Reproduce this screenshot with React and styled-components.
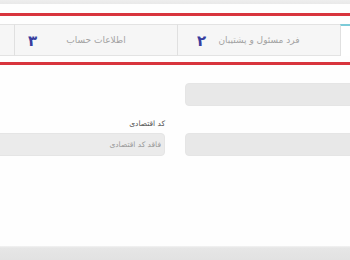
import styled, { createGlobalStyle } from "styled-components";

const GlobalStyle = createGlobalStyle`
  html, body {
    margin: 0;
    padding: 0;
    background: #e9e9e9;
    font-family: "DejaVu Sans", "Noto Sans", sans-serif;
    overflow: hidden;
  }
  * { box-sizing: border-box; }
`;

const Page = styled.div`
  width: 350px;
  height: 260px;
  overflow: hidden;
  padding-top: 4px;
  background: linear-gradient(#eeeeee 0, #e9e9e9 4px, #e9e9e9 246px, #f3f3f3 246px, #e6e6e6 248px, #e2e2e2 260px);
`;

const Card = styled.div`
  direction: rtl;
  background: #fefefe;
  height: 242px;
  padding-top: 9px;
  overflow: hidden;
`;

const Steps = styled.div`
  border-top: 3px solid #d8343d;
  border-bottom: 3px solid #d8343d;
  padding: 8px 0 6px;
`;

const TabRow = styled.div`
  display: flex;
  margin-right: -153px;
  width: 700px;
`;

const Tab = styled.div`
  flex: 0 0 163px;
  height: 32px;
  display: grid;
  grid-template-columns: 1fr auto 1fr;
  align-items: center;
  direction: ltr;
  background: ${({ $active }) => ($active ? "#ffffff" : "#f6f6f6")};
  border-top: ${({ $active }) => ($active ? "2px solid #7ccbd8" : "1px solid #e3e3e3")};
  border-bottom: ${({ $active }) => ($active ? "none" : "1px solid #e3e3e3")};
  border-left: 1px solid #e0e0e0;
`;

const Num = styled.span`
  justify-self: start;
  padding-left: ${({ $pad }) => $pad}px;
  color: #383e9f;
  font-size: 15px;
  font-weight: bold;
  line-height: 1;
  margin-top: 3px;
`;

const TabLabel = styled.span`
  direction: rtl;
  color: #a3a3a3;
  font-size: 9px;
  white-space: nowrap;
`;

const Form = styled.div`
  display: grid;
  grid-template-columns: 200px 200px;
  column-gap: 20px;
  margin-right: -35px;
  width: 420px;
  padding-top: 18px;
`;

const Field = styled.div`
  display: flex;
  flex-direction: column;
  min-height: 23px;
  margin-bottom: ${({ $mb }) => $mb || 0}px;
`;

const Label = styled.label`
  color: #555;
  font-size: 7.5px;
  height: 14px;
  line-height: 10px;
`;

const Input = styled.div`
  height: 23px;
  border-radius: 4px;
  background: ${({ $light }) => ($light ? "#ebebeb" : "#e8e8e8")};
  border: 1px solid #e5e5e5;
  color: #9a9a9a;
  font-size: 7.5px;
  display: flex;
  align-items: center;
  padding-right: 3px;
`;

export default function App() {
  return (
    <>
      <GlobalStyle />
      <Page>
        <Card>
          <Steps>
            <TabRow>
              <Tab $active />
              <Tab>
                <Num $pad={19}>۲</Num>
                <TabLabel>فرد مسئول و پشتیبان</TabLabel>
                <span />
              </Tab>
              <Tab>
                <Num $pad={13}>۳</Num>
                <TabLabel>اطلاعات حساب</TabLabel>
                <span />
              </Tab>
              <Tab />
            </TabRow>
          </Steps>
          <Form>
            <Field $mb={13}>
              <Input />
            </Field>
            <Field $mb={13} />
            <Field>
              <Label />
              <Input />
            </Field>
            <Field>
              <Label>کد اقتصادی</Label>
              <Input $light>فاقد کد اقتصادی</Input>
            </Field>
          </Form>
        </Card>
      </Page>
    </>
  );
}
